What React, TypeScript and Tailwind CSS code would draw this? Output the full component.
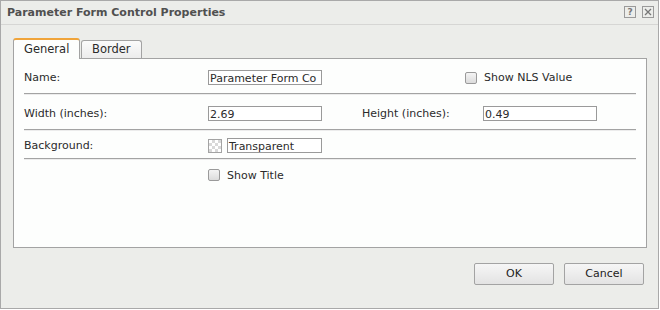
const font = { fontFamily: '"DejaVu Sans", Verdana, sans-serif' };

function Checkbox({ label }: { label: string }) {
  return (
    <label className="flex items-center gap-[7px]">
      <span className="w-[12px] h-[12px] rounded-[2px] border border-[#9a9a9a] bg-gradient-to-b from-[#f4f4f4] to-[#dcdcdc]" />
      <span className="pt-[2px]">{label}</span>
    </label>
  );
}

function Field({ value, w = "w-[114px]" }: { value: string; w?: string }) {
  return (
    <div className={`${w} h-[15px] border border-[#9a9a9a] bg-white flex items-center pl-[1px] pt-[2px] overflow-hidden whitespace-nowrap leading-none`}>
      {value}
    </div>
  );
}

function Sep() {
  return (
    <div>
      <div className="h-px bg-[#a3a3a3]" />
      <div className="h-px bg-[#ececec]" />
    </div>
  );
}

function Btn({ label }: { label: string }) {
  return (
    <button className="w-[80px] h-[22px] rounded-[2px] border border-[#a3a3a3] bg-gradient-to-b from-[#f6f6f6] to-[#e3e3e3] text-[#222] pt-[1px]">
      {label}
    </button>
  );
}

export default function App() {
  return (
    <div style={font} className="w-[659px] h-[309px] bg-[#ecedea] border border-[#a9a9a9] text-[11px] text-[#2b2b2b] flex flex-col">
      <div className="h-[24px] border-b border-[#d6d6d4] flex items-center justify-between pl-[6px] pr-[4px]">
        <span className="font-bold text-[#505050] pt-[1px]">Parameter Form Control Properties</span>
        <div className="flex gap-[6px] -mt-[1px]">
          <span className="w-[12px] h-[12px] border border-[#9a9a9a] flex items-center justify-center text-[9px] leading-none text-[#777] font-bold">?</span>
          <span className="w-[12px] h-[12px] border border-[#9a9a9a] flex items-center justify-center text-[#777]">
            <svg width="8" height="8" viewBox="0 0 8 8">
              <path d="M1 1L7 7M7 1L1 7" stroke="#777" strokeWidth="1.3" />
            </svg>
          </span>
        </div>
      </div>

      <div className="pl-[12px] pr-[12px] pt-[12px]">
        <div className="flex items-end h-[21px]">
          <div className="w-[67px] h-[21px] bg-[#fdfefd] border border-b-0 border-[#a3a3a3] border-t-2 border-t-[#f0a43a] rounded-t-[3px] flex items-center pl-[10px] text-[11.5px] relative z-10 -mb-px">
            General
          </div>
          <div className="ml-px w-[61px] h-[18px] bg-gradient-to-b from-[#fbfbfb] to-[#ececec] border border-b-0 border-[#a3a3a3] rounded-t-[3px] flex items-center pl-[10px] text-[11.5px] pt-[1px]">
            Border
          </div>
        </div>
        <div className="w-[634px] h-[190px] bg-[#fdfefd] border border-[#a3a3a3] px-[10px]">
          <div className="h-[34px] flex items-center pt-[3px]">
            <span className="w-[184px] pt-[2px]">Name:</span>
            <Field value="Parameter Form Co" />
            <div className="ml-[143px]">
              <Checkbox label="Show NLS Value" />
            </div>
          </div>
          <Sep />
          <div className="h-[34px] flex items-center pt-[2px]">
            <span className="w-[184px] pt-[2px]">Width (inches):</span>
            <Field value="2.69" />
            <span className="ml-[40px] w-[121px] pt-[2px]">Height (inches):</span>
            <Field value="0.49" />
          </div>
          <Sep />
          <div className="h-[27px] flex items-center pt-[2px]">
            <span className="w-[184px] pt-[2px]">Background:</span>
            <span className="w-[14px] h-[14px] border border-[#a3a3a3] bg-[conic-gradient(#d8d8d8_25%,#ffffff_0_50%,#d8d8d8_0_75%,#ffffff_0)] bg-[length:6px_6px]" />
            <div className="ml-[5px]">
              <Field value="Transparent" w="w-[95px]" />
            </div>
          </div>
          <Sep />
          <div className="h-[29px] flex items-center pl-[184px] pt-[1px]">
            <Checkbox label="Show Title" />
          </div>
        </div>
        <div className="flex justify-end gap-[10px] pt-[15px] pr-[2px]">
          <Btn label="OK" />
          <Btn label="Cancel" />
        </div>
      </div>
    </div>
  );
}
